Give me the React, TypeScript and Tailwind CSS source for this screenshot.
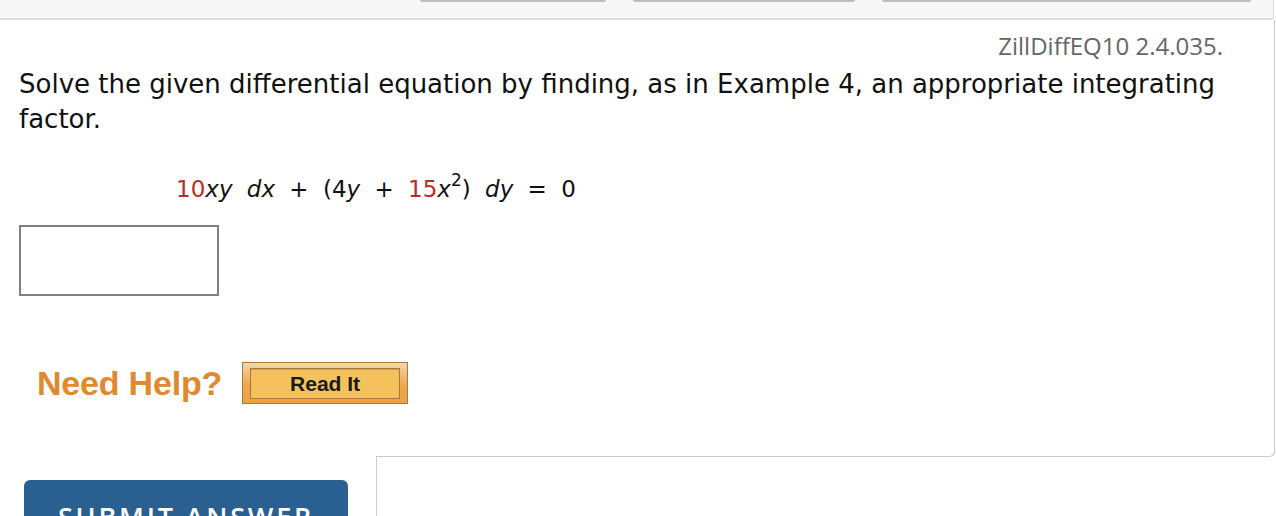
import React from 'react';

// Question card: gray tab strip, question panel, and submit row

const Red: React.FC<{ children: React.ReactNode }> = ({ children }) => (
    <span className="text-[#bd2a2a]">{children}</span>
);

export default function App() {
    return (
        <div className="w-[1276px] h-[516px] overflow-hidden bg-white font-['DejaVu_Sans',sans-serif] text-[#111]">
            {/* Tab strip */}
            <div className="h-[20px] w-[1274px] bg-[#f6f6f6] border-b-2 border-r border-[#dcdcdc] rounded-br-[4px]">
                <div className="flex pl-[420px] gap-[27px]">
                    <div className="w-[186px] h-[2px] bg-[#bdbdbd] rounded-b-sm" />
                    <div className="w-[222px] h-[2px] bg-[#bdbdbd] rounded-b-sm" />
                    <div className="w-[369px] h-[2px] bg-[#bdbdbd] rounded-b-sm" />
                </div>
            </div>

            {/* Question panel */}
            <div className="w-[1275px] border-r border-[#cccccc] rounded-br-[6px]">
                <div className="pt-[10px] pr-[51px] text-right font-['Open_Sans',sans-serif] text-[24px] leading-[32px] text-[#666]">
                    ZillDiffEQ10 2.4.035.
                </div>

                <p className="mt-[5px] pl-[19px] w-[1240px] text-[26px] leading-[35px]">
                    Solve the given differential equation by finding, as in Example 4, an appropriate integrating factor.
                </p>

                <div className="mt-[35px] pl-[176px] text-[23px] leading-[35px] whitespace-pre [word-spacing:7px]">
                    <Red>10</Red><i>xy dx</i> + (4<i>y</i> + <Red>15</Red><i>x</i><span className="relative -top-[11px] text-[17px] leading-none">2</span>) <i>dy</i> = 0
                </div>

                <div className="mt-[18px] ml-[19px] w-[200px] h-[71px] border-2 border-[#808080]" />

                <div className="mt-[66px] pl-[37px] flex items-center gap-[20px]">
                    <span className="font-['Liberation_Sans',sans-serif] font-bold text-[34px] leading-[40px] text-[#e0892e] tracking-[-0.2px]">
                        Need Help?
                    </span>
                    <button className="w-[166px] h-[42px] border border-[#a8783c] bg-gradient-to-b from-[#f6d7a6] via-[#eeaa52] to-[#ec9f45] pt-[5px] pb-[4px] pl-[7px] pr-[7px]">
                        <div className="h-full border border-[#a47a3e] bg-[#f4c15c] flex items-center justify-center font-['Liberation_Sans',sans-serif] font-bold text-[21px] leading-none text-[#1a1a1a] shadow-[inset_0_1px_1px_rgba(0,0,0,0.15)]">
                            Read It
                        </div>
                    </button>
                </div>

                <div className="h-[53px] ml-[376px] -mr-px border-b border-r border-[#cccccc] rounded-br-[6px]" />
            </div>

            {/* Submit row */}
            <div className="flex">
                <div className="w-[376px] pl-[24px] pt-[23px]">
                    <button className="w-[324px] h-[70px] bg-[#2a5f91] rounded-t-[6px] pt-[19px] text-white font-['Open_Sans',sans-serif] font-semibold text-[27px] leading-[36px] tracking-[2.8px] flex justify-center items-start">
                        SUBMIT ANSWER
                    </button>
                </div>
                <div className="w-[898px] h-[80px] border-l border-[#cccccc]" />
            </div>
        </div>
    );
}
